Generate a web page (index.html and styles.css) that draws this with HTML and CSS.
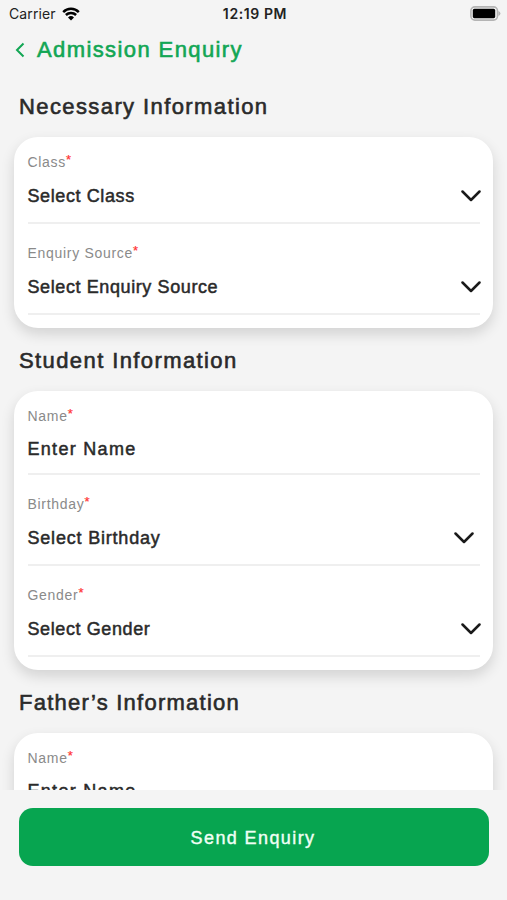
FILE: index.html
```html
<!DOCTYPE html>
<html lang="en">
<head>
    <meta charset="UTF-8">
    <meta name="viewport" content="width=device-width, initial-scale=1.0">
    <title>Admission Enquiry</title>
    <link rel="stylesheet" href="styles.css">
</head>
<body>
    <div class="status-bar">
        <div class="carrier">
            <span>Carrier</span>
            <svg class="wifi" viewBox="0 0 18 14" width="18" height="14">
                <path d="M1.2 5.1 A11 11 0 0 1 16.8 5.1" />
                <path d="M3.9 8 A7.2 7.2 0 0 1 14.1 8" />
                <path class="wifi-dot" d="M9 13.4 L6 10.4 A4.3 4.3 0 0 1 12 10.4 Z" />
            </svg>
        </div>
        <div class="time">12:19 PM</div>
        <svg class="battery" viewBox="0 0 31 15" width="31" height="15">
            <rect class="battery-case" x="0.9" y="0.9" width="26.6" height="13.2" rx="4" />
            <rect x="2.8" y="2.8" width="22.4" height="9.4" rx="1.6" />
            <path class="battery-cap" d="M28.4 5 Q30.4 5.8 30.4 7.5 Q30.4 9.2 28.4 10 Z" />
        </svg>
    </div>

    <header class="header">
        <svg class="back" viewBox="0 0 10 16" width="10" height="16"><path d="M8.5 1.5 L2 8 L8.5 14.5" /></svg>
        <h1>Admission Enquiry</h1>
    </header>

    <main class="content">
        <h2>Necessary Information</h2>
        <div class="card">
            <div class="field">
                <label>Class<span class="required">*</span></label>
                <div class="value">Select Class
                    <svg class="arrow" viewBox="0 0 20 12" width="20" height="12"><path d="M1.5 1.5 L10 10 L18.5 1.5" /></svg>
                </div>
            </div>
            <div class="field">
                <label>Enquiry Source<span class="required">*</span></label>
                <div class="value">Select Enquiry Source
                    <svg class="arrow" viewBox="0 0 20 12" width="20" height="12"><path d="M1.5 1.5 L10 10 L18.5 1.5" /></svg>
                </div>
            </div>
        </div>

        <h2>Student Information</h2>
        <div class="card">
            <div class="field text-field">
                <label>Name<span class="required">*</span></label>
                <div class="value">Enter Name</div>
            </div>
            <div class="field date-field">
                <label>Birthday<span class="required">*</span></label>
                <div class="value">Select Birthday
                    <svg class="arrow" viewBox="0 0 20 12" width="20" height="12"><path d="M1.5 1.5 L10 10 L18.5 1.5" /></svg>
                </div>
            </div>
            <div class="field">
                <label>Gender<span class="required">*</span></label>
                <div class="value">Select Gender
                    <svg class="arrow" viewBox="0 0 20 12" width="20" height="12"><path d="M1.5 1.5 L10 10 L18.5 1.5" /></svg>
                </div>
            </div>
        </div>

        <h2 class="father">Father’s Information</h2>
        <div class="card">
            <div class="field text-field">
                <label>Name<span class="required">*</span></label>
                <div class="value">Enter Name</div>
            </div>
        </div>
    </main>

    <footer class="footer">
        <button class="send">Send Enquiry</button>
    </footer>
</body>
</html>
```

FILE: styles.css
```css
* {
    box-sizing: border-box;
}
body {
    font-family: "Liberation Sans", Arial, sans-serif;
    margin: 0;
    height: 100vh;
    display: flex;
    flex-direction: column;
    overflow: hidden;
    background-color: #f4f4f4;
    color: #2a2a2a;
}
.status-bar {
    display: grid;
    grid-template-columns: 1fr auto 1fr;
    align-items: center;
    height: 27px;
    padding: 0 6px 0 9px;
    font-family: Inter, sans-serif;
    font-size: 14px;
    color: #222;
}
.carrier {
    display: flex;
    align-items: center;
    gap: 6px;
    letter-spacing: 0.1px;
}
.wifi {
    fill: none;
    stroke: #000;
    stroke-width: 2.5;
}
.wifi-dot {
    fill: #000;
    stroke: none;
}
.time {
    font-weight: 600;
    letter-spacing: 0.6px;
}
.battery {
    justify-self: end;
}
.battery-case {
    fill: none;
    stroke: #b4b4b4;
    stroke-width: 1.6;
}
.battery-cap {
    fill: #b4b4b4;
}
.header {
    display: flex;
    align-items: center;
    gap: 12px;
    height: 45px;
    padding-left: 15px;
    color: #12a654;
}
.back {
    fill: none;
    stroke: #12a654;
    stroke-width: 2;
}
h1, h2 {
    margin: 0;
    font-size: 22px;
    font-weight: normal;
    -webkit-text-stroke: 0.6px;
}
h1 {
    letter-spacing: 1.4px;
}
h2 {
    line-height: 26px;
    padding-left: 5px;
    letter-spacing: 1.4px;
}
.father {
    letter-spacing: 1.25px;
}
.content {
    flex: 1;
    min-height: 0;
    overflow: hidden;
    padding: 22px 14px 0;
}
.card {
    margin: 17px 0 20px;
    padding: 14px 13px 13px 13.5px;
    background-color: #fff;
    border-radius: 24px;
    box-shadow: 0 6px 14px rgba(0, 0, 0, 0.14);
}
.field {
    height: 73px;
    border-bottom: 2px solid #efefef;
}
.field + .field {
    margin-top: 18px;
}
label {
    display: block;
    height: 20px;
    line-height: 22px;
    font-size: 14px;
    letter-spacing: 0.7px;
    color: #8a8a8a;
}
.required {
    color: #f33;
    font-size: 13px;
    line-height: 1;
    vertical-align: 3px;
    -webkit-text-stroke: 0.2px;
}
.value {
    display: flex;
    align-items: center;
    justify-content: space-between;
    height: 51px;
    font-size: 18px;
    letter-spacing: 0.6px;
    -webkit-text-stroke: 0.5px;
}
.text-field {
    height: 70px;
}
.text-field .value {
    height: 48px;
    letter-spacing: 1.3px;
}
.date-field .value {
    letter-spacing: 0.8px;
}
.arrow {
    margin: 0 -1px 1px 0;
    fill: none;
    stroke: #1a1a1a;
    stroke-width: 2.5;
    stroke-linecap: round;
    stroke-linejoin: round;
}
.date-field .arrow {
    margin-right: 6px;
}
.footer {
    height: 110px;
    padding: 18px 18px 0 19px;
}
.send {
    width: 100%;
    height: 58px;
    padding: 2px 2px 0 0;
    border: none;
    border-radius: 14px;
    background-color: #07a550;
    color: #f0fff5;
    font-family: inherit;
    font-size: 18px;
    letter-spacing: 1.4px;
    -webkit-text-stroke: 0.4px;
}
```
